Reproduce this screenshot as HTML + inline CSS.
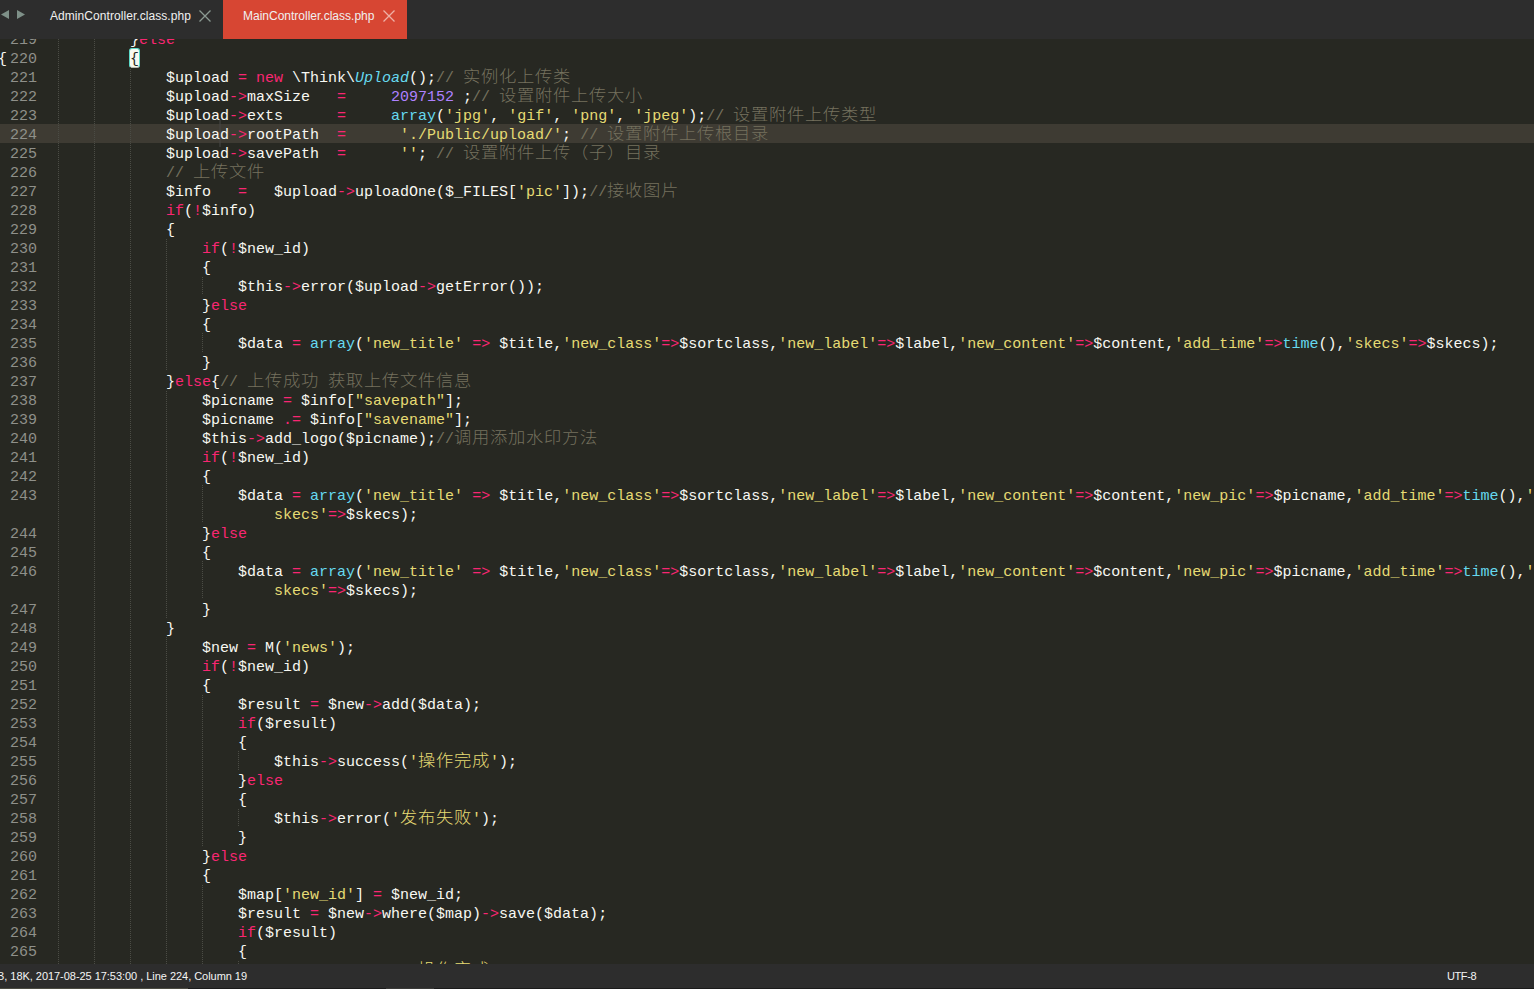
<!DOCTYPE html>
<html lang="zh-CN">
<head>
<meta charset="utf-8">
<title>MainController.class.php - Sublime Text</title>
<style>
html,body{margin:0;padding:0;}
body{width:1534px;height:989px;overflow:hidden;background:#272822;position:relative;font-family:"Liberation Sans","Noto Sans CJK SC",sans-serif;}
#ed{position:absolute;left:0;top:0;width:1534px;height:964px;overflow:hidden;background:#272822;
  font-family:"Liberation Mono","Noto Sans CJK SC",monospace;font-size:15px;color:#f8f8f2;}
#hl{position:absolute;left:0;top:124px;width:1534px;height:19px;background:#3e3b33;}
.l{position:absolute;height:19px;line-height:19px;white-space:pre;padding-top:2px;}
.g{position:absolute;left:0;width:37px;height:19px;line-height:19px;text-align:right;color:#8f908a;white-space:pre;padding-top:2px;}
.gd{position:absolute;width:1px;background-image:linear-gradient(to bottom,#4b4c45 50%,transparent 50%);background-size:1px 2px;}
.gd.ev{background-position:0 1px}
.k{color:#f92672}.s{color:#e6db74}.c{color:#75715e}.f{color:#66d9ef}.n{color:#ae81ff}.i{color:#66d9ef;font-style:italic}
.z{display:inline-block;height:17px;vertical-align:baseline;}
.z>span{display:inline-block;transform:scaleX(1.08);transform-origin:0 50%;font-size:16px;letter-spacing:0.67px;font-weight:300;position:relative;top:0.4px;line-height:17px;}
.b{color:#272822;}
#bx{position:absolute;left:129px;top:48px;width:11px;height:20px;box-sizing:border-box;background:#f8f8f0;border:1px solid #5cd9c8;border-bottom-color:#b8b8b0;border-radius:3px;}
#tabs{position:absolute;left:0;top:0;width:1534px;height:39px;background:#2d2d2d;font-size:12px;color:#f0f0f0;}
#tabs .t{position:absolute;top:0;height:39px;line-height:33px;white-space:pre;letter-spacing:0.06px;}
#tabs .act{left:223px;width:184px;background:#d74633;}
#status{position:absolute;left:0;top:964px;width:1534px;height:25px;background:#2d2d2d;color:#f4f4f4;font-size:11px;line-height:24px;white-space:pre;}
</style>
</head>
<body>
<div id="ed">
<div id="hl"></div>
<div id="bx"></div>
<div style="position:absolute;left:219px;top:120px;width:2px;height:27px;background:rgba(70,70,68,0.55)"></div>
<i class="gd" style="left:58px;top:29px;height:950px"></i><i class="gd" style="left:94px;top:29px;height:950px"></i><i class="gd" style="left:130px;top:67px;height:912px"></i><i class="gd ev" style="left:166px;top:238px;height:133px"></i><i class="gd ev" style="left:166px;top:390px;height:228px"></i><i class="gd" style="left:166px;top:637px;height:342px"></i><i class="gd ev" style="left:202px;top:276px;height:19px"></i><i class="gd" style="left:202px;top:333px;height:19px"></i><i class="gd" style="left:202px;top:485px;height:38px"></i><i class="gd" style="left:202px;top:561px;height:38px"></i><i class="gd ev" style="left:202px;top:694px;height:152px"></i><i class="gd ev" style="left:202px;top:884px;height:95px"></i><i class="gd" style="left:238px;top:751px;height:19px"></i><i class="gd ev" style="left:238px;top:808px;height:19px"></i><i class="gd ev" style="left:238px;top:960px;height:19px"></i>
<div class="g" style="top:29px">219</div>
<div class="g" style="top:48px">220</div>
<div class="g" style="top:67px">221</div>
<div class="g" style="top:86px">222</div>
<div class="g" style="top:105px">223</div>
<div class="g" style="top:124px">224</div>
<div class="g" style="top:143px">225</div>
<div class="g" style="top:162px">226</div>
<div class="g" style="top:181px">227</div>
<div class="g" style="top:200px">228</div>
<div class="g" style="top:219px">229</div>
<div class="g" style="top:238px">230</div>
<div class="g" style="top:257px">231</div>
<div class="g" style="top:276px">232</div>
<div class="g" style="top:295px">233</div>
<div class="g" style="top:314px">234</div>
<div class="g" style="top:333px">235</div>
<div class="g" style="top:352px">236</div>
<div class="g" style="top:371px">237</div>
<div class="g" style="top:390px">238</div>
<div class="g" style="top:409px">239</div>
<div class="g" style="top:428px">240</div>
<div class="g" style="top:447px">241</div>
<div class="g" style="top:466px">242</div>
<div class="g" style="top:485px">243</div>
<div class="g" style="top:523px">244</div>
<div class="g" style="top:542px">245</div>
<div class="g" style="top:561px">246</div>
<div class="g" style="top:599px">247</div>
<div class="g" style="top:618px">248</div>
<div class="g" style="top:637px">249</div>
<div class="g" style="top:656px">250</div>
<div class="g" style="top:675px">251</div>
<div class="g" style="top:694px">252</div>
<div class="g" style="top:713px">253</div>
<div class="g" style="top:732px">254</div>
<div class="g" style="top:751px">255</div>
<div class="g" style="top:770px">256</div>
<div class="g" style="top:789px">257</div>
<div class="g" style="top:808px">258</div>
<div class="g" style="top:827px">259</div>
<div class="g" style="top:846px">260</div>
<div class="g" style="top:865px">261</div>
<div class="g" style="top:884px">262</div>
<div class="g" style="top:903px">263</div>
<div class="g" style="top:922px">264</div>
<div class="g" style="top:941px">265</div>
<div class="g" style="top:960px">266</div>
<div class="l" style="top:48px;left:-2px;color:#f8f8f2">{</div>
<div class="l" style="top:29px;left:130px">}<span class="k">else</span></div>
<div class="l" style="top:48px;left:130px"><span class="b">{</span></div>
<div class="l" style="top:67px;left:166px">$upload <span class="k">=</span> <span class="k">new</span> \Think\<span class="i">Upload</span>();<span class="c">// <span class="z" style="width:108px"><span>实例化上传类</span></span></span></div>
<div class="l" style="top:86px;left:166px">$upload<span class="k">-&gt;</span>maxSize   <span class="k">=</span>     <span class="n">2097152</span> ;<span class="c">// <span class="z" style="width:144px"><span>设置附件上传大小</span></span></span></div>
<div class="l" style="top:105px;left:166px">$upload<span class="k">-&gt;</span>exts      <span class="k">=</span>     <span class="f">array</span>(<span class="s">'jpg'</span>, <span class="s">'gif'</span>, <span class="s">'png'</span>, <span class="s">'jpeg'</span>);<span class="c">// <span class="z" style="width:144px"><span>设置附件上传类型</span></span></span></div>
<div class="l" style="top:124px;left:166px">$upload<span class="k">-&gt;</span>rootPath  <span class="k">=</span>      <span class="s">'./Public/upload/'</span>; <span class="c">// <span class="z" style="width:162px"><span>设置附件上传根目录</span></span></span></div>
<div class="l" style="top:143px;left:166px">$upload<span class="k">-&gt;</span>savePath  <span class="k">=</span>      <span class="s">''</span>; <span class="c">// <span class="z" style="width:198px"><span>设置附件上传（子）目录</span></span></span></div>
<div class="l" style="top:162px;left:166px"><span class="c">// <span class="z" style="width:72px"><span>上传文件</span></span></span></div>
<div class="l" style="top:181px;left:166px">$info   <span class="k">=</span>   $upload<span class="k">-&gt;</span>uploadOne($_FILES[<span class="s">'pic'</span>]);<span class="c">//<span class="z" style="width:72px"><span>接收图片</span></span></span></div>
<div class="l" style="top:200px;left:166px"><span class="k">if</span>(<span class="k">!</span>$info)</div>
<div class="l" style="top:219px;left:166px">{</div>
<div class="l" style="top:238px;left:202px"><span class="k">if</span>(<span class="k">!</span>$new_id)</div>
<div class="l" style="top:257px;left:202px">{</div>
<div class="l" style="top:276px;left:238px">$this<span class="k">-&gt;</span>error($upload<span class="k">-&gt;</span>getError());</div>
<div class="l" style="top:295px;left:202px">}<span class="k">else</span></div>
<div class="l" style="top:314px;left:202px">{</div>
<div class="l" style="top:333px;left:238px">$data <span class="k">=</span> <span class="f">array</span>(<span class="s">'new_title'</span> <span class="k">=&gt;</span> $title,<span class="s">'new_class'</span><span class="k">=&gt;</span>$sortclass,<span class="s">'new_label'</span><span class="k">=&gt;</span>$label,<span class="s">'new_content'</span><span class="k">=&gt;</span>$content,<span class="s">'add_time'</span><span class="k">=&gt;</span><span class="f">time</span>(),<span class="s">'skecs'</span><span class="k">=&gt;</span>$skecs);</div>
<div class="l" style="top:352px;left:202px">}</div>
<div class="l" style="top:371px;left:166px">}<span class="k">else</span>{<span class="c">// <span class="z" style="width:72px"><span>上传成功</span></span> <span class="z" style="width:144px"><span>获取上传文件信息</span></span></span></div>
<div class="l" style="top:390px;left:202px">$picname <span class="k">=</span> $info[<span class="s">"savepath"</span>];</div>
<div class="l" style="top:409px;left:202px">$picname <span class="k">.=</span> $info[<span class="s">"savename"</span>];</div>
<div class="l" style="top:428px;left:202px">$this<span class="k">-&gt;</span>add_logo($picname);<span class="c">//<span class="z" style="width:144px"><span>调用添加水印方法</span></span></span></div>
<div class="l" style="top:447px;left:202px"><span class="k">if</span>(<span class="k">!</span>$new_id)</div>
<div class="l" style="top:466px;left:202px">{</div>
<div class="l" style="top:485px;left:238px">$data <span class="k">=</span> <span class="f">array</span>(<span class="s">'new_title'</span> <span class="k">=&gt;</span> $title,<span class="s">'new_class'</span><span class="k">=&gt;</span>$sortclass,<span class="s">'new_label'</span><span class="k">=&gt;</span>$label,<span class="s">'new_content'</span><span class="k">=&gt;</span>$content,<span class="s">'new_pic'</span><span class="k">=&gt;</span>$picname,<span class="s">'add_time'</span><span class="k">=&gt;</span><span class="f">time</span>(),<span class="s">'</span></div>
<div class="l" style="top:504px;left:274px"><span class="s">skecs'</span><span class="k">=&gt;</span>$skecs);</div>
<div class="l" style="top:523px;left:202px">}<span class="k">else</span></div>
<div class="l" style="top:542px;left:202px">{</div>
<div class="l" style="top:561px;left:238px">$data <span class="k">=</span> <span class="f">array</span>(<span class="s">'new_title'</span> <span class="k">=&gt;</span> $title,<span class="s">'new_class'</span><span class="k">=&gt;</span>$sortclass,<span class="s">'new_label'</span><span class="k">=&gt;</span>$label,<span class="s">'new_content'</span><span class="k">=&gt;</span>$content,<span class="s">'new_pic'</span><span class="k">=&gt;</span>$picname,<span class="s">'add_time'</span><span class="k">=&gt;</span><span class="f">time</span>(),<span class="s">'</span></div>
<div class="l" style="top:580px;left:274px"><span class="s">skecs'</span><span class="k">=&gt;</span>$skecs);</div>
<div class="l" style="top:599px;left:202px">}</div>
<div class="l" style="top:618px;left:166px">}</div>
<div class="l" style="top:637px;left:202px">$new <span class="k">=</span> M(<span class="s">'news'</span>);</div>
<div class="l" style="top:656px;left:202px"><span class="k">if</span>(<span class="k">!</span>$new_id)</div>
<div class="l" style="top:675px;left:202px">{</div>
<div class="l" style="top:694px;left:238px">$result <span class="k">=</span> $new<span class="k">-&gt;</span>add($data);</div>
<div class="l" style="top:713px;left:238px"><span class="k">if</span>($result)</div>
<div class="l" style="top:732px;left:238px">{</div>
<div class="l" style="top:751px;left:274px">$this<span class="k">-&gt;</span>success(<span class="s">'<span class="z" style="width:72px"><span>操作完成</span></span>'</span>);</div>
<div class="l" style="top:770px;left:238px">}<span class="k">else</span></div>
<div class="l" style="top:789px;left:238px">{</div>
<div class="l" style="top:808px;left:274px">$this<span class="k">-&gt;</span>error(<span class="s">'<span class="z" style="width:72px"><span>发布失败</span></span>'</span>);</div>
<div class="l" style="top:827px;left:238px">}</div>
<div class="l" style="top:846px;left:202px">}<span class="k">else</span></div>
<div class="l" style="top:865px;left:202px">{</div>
<div class="l" style="top:884px;left:238px">$map[<span class="s">'new_id'</span>] <span class="k">=</span> $new_id;</div>
<div class="l" style="top:903px;left:238px">$result <span class="k">=</span> $new<span class="k">-&gt;</span>where($map)<span class="k">-&gt;</span>save($data);</div>
<div class="l" style="top:922px;left:238px"><span class="k">if</span>($result)</div>
<div class="l" style="top:941px;left:238px">{</div>
<div class="l" style="top:960px;left:274px">$this<span class="k">-&gt;</span>success(<span class="s">'<span class="z" style="width:72px"><span>操作完成</span></span>'</span>);</div>
</div>
<div id="tabs">
  <svg width="30" height="39" style="position:absolute;left:0;top:0"><path d="M9 10 L9 19 L1 14.5 Z M17 10 L17 19 L25 14.5 Z" fill="#7e9088"/></svg>
  <div class="t" style="left:50px">AdminController.class.php</div>
  <svg width="14" height="14" style="position:absolute;left:198px;top:9px"><path d="M1.5 1.5 L12.5 12.5 M12.5 1.5 L1.5 12.5" stroke="#8b9a92" stroke-width="1.3" fill="none"/></svg>
  <div class="t act"></div>
  <div class="t" style="left:243px;letter-spacing:0">MainController.class.php</div>
  <svg width="14" height="14" style="position:absolute;left:382px;top:9px"><path d="M1.5 1.5 L12.5 12.5 M12.5 1.5 L1.5 12.5" stroke="#eeb0a6" stroke-width="1.3" fill="none"/></svg>
</div>
<div id="status"><span style="position:absolute;left:-3px;letter-spacing:-0.04px">B, 18K, 2017-08-25 17:53:00 , Line 224, Column 19</span><span style="position:absolute;left:1447px;letter-spacing:-0.4px">UTF-8</span></div>
<div style="position:absolute;left:0;top:988px;width:1534px;height:1px;background:#1b1b1b"></div>
<div style="position:absolute;left:0;top:988px;width:188px;height:1px;background:#4a4a42"></div>
<div style="position:absolute;left:386px;top:988px;width:48px;height:1px;background:#3a3a38"></div>
</body>
</html>
